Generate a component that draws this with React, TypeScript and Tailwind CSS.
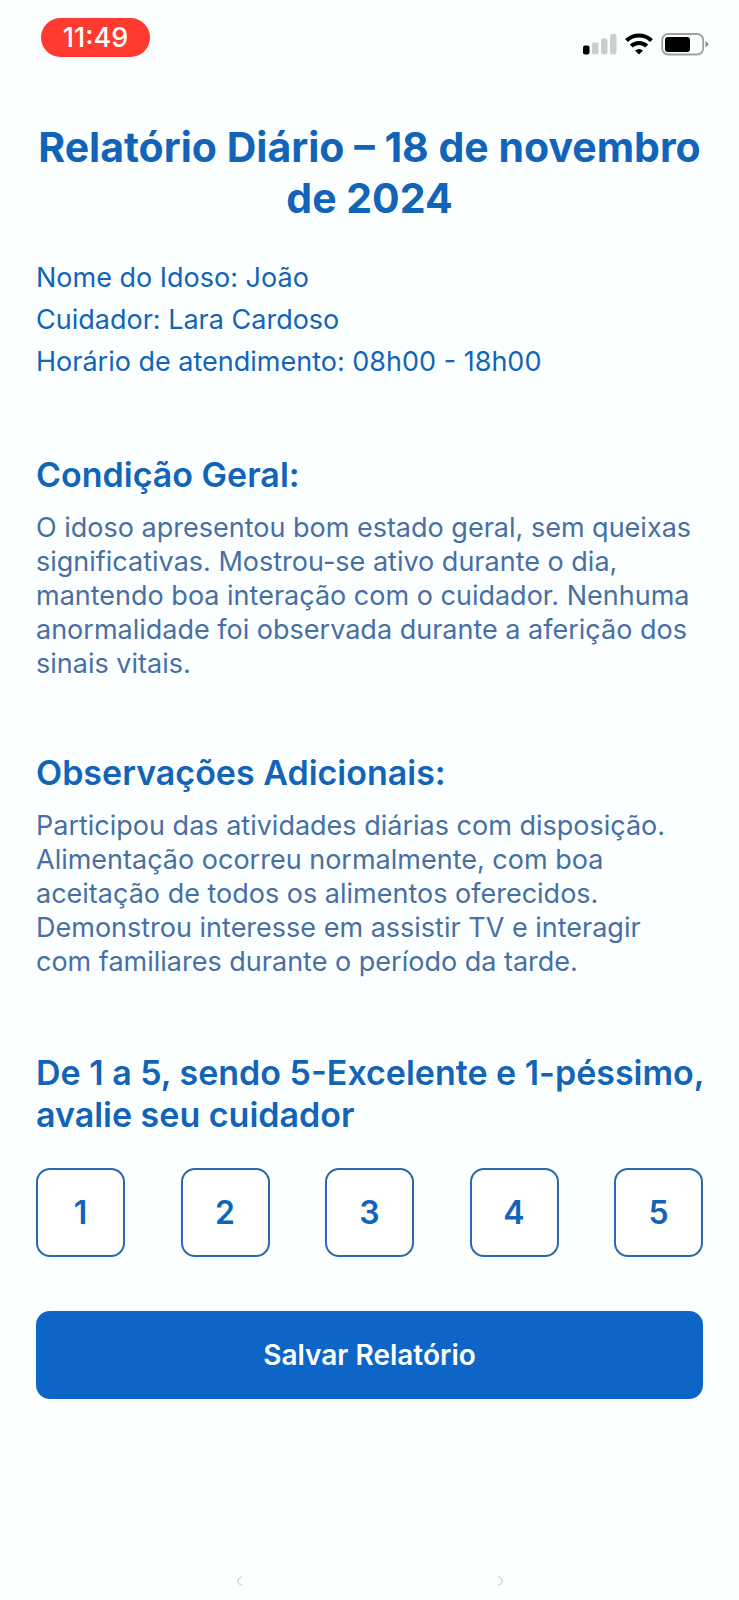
const details = [
  'Nome do Idoso: João',
  'Cuidador: Lara Cardoso',
  'Horário de atendimento: 08h00 - 18h00',
];

const sections = [
  {
    title: 'Condição Geral:',
    body: 'O idoso apresentou bom estado geral, sem queixas significativas. Mostrou-se ativo durante o dia, mantendo boa interação com o cuidador. Nenhuma anormalidade foi observada durante a aferição dos sinais vitais.',
  },
  {
    title: 'Observações Adicionais:',
    body: 'Participou das atividades diárias com disposição. Alimentação ocorreu normalmente, com boa aceitação de todos os alimentos oferecidos. Demonstrou interesse em assistir TV e interagir com familiares durante o período da tarde.',
  },
];

const ratings = [1, 2, 3, 4, 5];

function StatusBar() {
  return (
    <header className="flex h-20 items-start justify-between pr-[30px] pl-[41px]">
      <div className="mt-[18px] flex h-[39px] w-[109px] items-center justify-center rounded-full bg-[#ff3b30] pt-0.5 text-[27px] font-medium text-white">
        11:49
      </div>
      <div className="mt-8 flex items-center gap-2">
        <svg className="h-6 w-[34px]" viewBox="0 0 34 24" aria-label="Sinal">
          <rect x="0" y="13.5" width="6.5" height="9" rx="2" fill="#000" />
          <rect x="9" y="10.5" width="6.5" height="12" rx="2" fill="#cbcece" />
          <rect x="18" y="6.5" width="6.5" height="16" rx="2" fill="#cbcece" />
          <rect x="27" y="2" width="6.5" height="20.5" rx="2" fill="#cbcece" />
        </svg>
        <svg className="h-6 w-7" viewBox="0 0 28 24" fill="none" stroke="#000" strokeWidth="4" aria-label="Wi-Fi">
          <path d="M1.5 8.5A18 18 0 0 1 26.5 8.5M6.2 14A11.3 11.3 0 0 1 21.8 14" />
          <path d="M14 22.5l-4-4q4-3.2 8 0z" fill="#000" stroke="none" />
        </svg>
        <svg className="h-6 w-12" viewBox="0 0 48 24" aria-label="Bateria">
          <rect x="1.2" y="2" width="41" height="20.5" rx="6" fill="none" stroke="#9da1a1" strokeWidth="1.8" />
          <rect x="4" y="5" width="25" height="15" rx="3" fill="#000" />
          <path d="M44.5 9q5.500 3.300 0 6.600z" fill="#858989" />
        </svg>
      </div>
    </header>
  );
}

function HomeIndicator() {
  return (
    <div className="mt-auto flex justify-center pb-[14px]">
      <svg className="h-[10px] w-[266px]" viewBox="0 0 266 10" fill="none" aria-hidden="true">
        <rect x="1" y="1" width="264" height="8" rx="4" fill="#fff" />
        <path d="M5 1A4 4 0 0 0 5 9M261 1A4 4 0 0 1 261 9" stroke="#d0d6d8" strokeWidth="1.5" />
      </svg>
    </div>
  );
}

export default function App() {
  return (
    <div className="flex min-h-screen flex-col bg-[#fcffff] font-[Inter,sans-serif] text-[#1264b8]">
      <StatusBar />
      <main className="px-9 pt-[42px]">
        <h1 className="text-center text-[41px] leading-[51px] font-bold">
          Relatório Diário – 18 de novembro de 2024
        </h1>
        <div className="mt-[33px] text-[27px] leading-[42px]">
          {details.map((line) => (
            <p key={line}>{line}</p>
          ))}
        </div>
        {sections.map((section) => (
          <section key={section.title} className="mt-[71px]">
            <h2 className="text-[34px] leading-[42px] font-semibold">{section.title}</h2>
            <p className="mt-[15px] text-[27px] leading-[34px] text-[#486fa3]">{section.body}</p>
          </section>
        ))}
        <form className="mt-[73px]" onSubmit={(event) => event.preventDefault()}>
          <h2 id="rating-title" className="-mr-4 text-[34px] leading-[42px] font-semibold">
            De 1 a 5, sendo 5-Excelente e 1-péssimo, avalie seu cuidador
          </h2>
          <div role="group" aria-labelledby="rating-title" className="mt-8 flex justify-between">
            {ratings.map((value) => (
              <button
                key={value}
                type="button"
                className="size-[89px] rounded-[14px] border-2 border-[#2a68b2] bg-white text-[32px] font-semibold"
              >
                {value}
              </button>
            ))}
          </div>
          <button
            type="submit"
            className="mt-[54px] h-[88px] w-full rounded-[14px] bg-[#0d66c7] text-[28px] font-semibold text-white"
          >
            Salvar Relatório
          </button>
        </form>
      </main>
      <HomeIndicator />
    </div>
  );
}
